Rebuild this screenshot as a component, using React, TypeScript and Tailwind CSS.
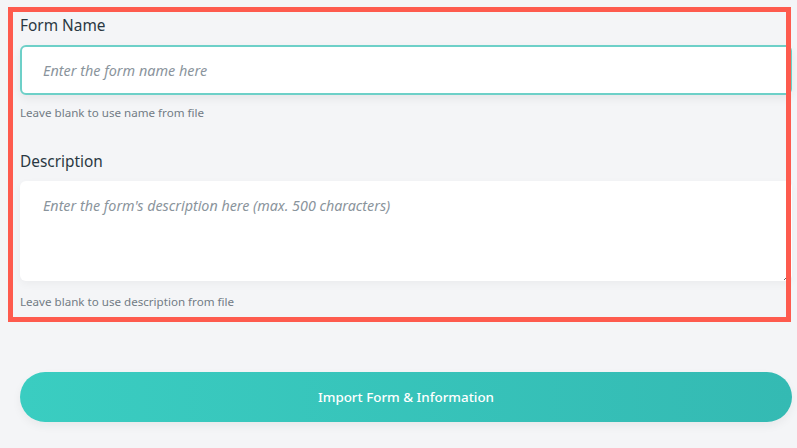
import React from "react";

export default function App() {
  const font = { fontFamily: '"Noto Sans", "Open Sans", sans-serif' };
  return (
    <div
      className="relative min-h-screen w-full bg-[#f4f5f7] pl-5 pr-[5px] pt-[14px] text-[#2a3842]"
      style={font}
    >
      <label className="block text-[15.4px] leading-6">Form Name</label>
      <input
        className="mt-[7px] block h-[50px] w-full rounded-[6px] border-2 border-[#6dd0c8] bg-white pl-[21px] text-[14.4px] italic shadow-[0_4px_10px_rgba(0,0,0,0.06)] outline-none placeholder:text-[#8a949c]"
        placeholder="Enter the form name here"
      />
      <p className="mt-[10px] text-[11.6px] leading-4 text-[#727c85]">
        Leave blank to use name from file
      </p>
      <label className="mt-[29px] block text-[15.4px] leading-6">Description</label>
      <textarea
        className="mt-[7px] block h-[100px] w-full rounded-[6px] bg-white pl-[23px] pt-[14px] text-[14.3px] leading-[22px] italic shadow-[0_3px_8px_rgba(0,0,0,0.04)] outline-none placeholder:text-[#8a949c]"
        placeholder="Enter the form's description here (max. 500 characters)"
      />
      <p className="mt-[13px] text-[11.6px] leading-4 text-[#727c85]">
        Leave blank to use description from file
      </p>
      <button className="mt-[62px] flex h-[50px] w-full items-center justify-center rounded-full bg-gradient-to-r from-[#3acdc1] to-[#34bab3] text-[13.4px] font-medium text-white shadow-[0_4px_10px_rgba(0,0,0,0.05)]">
        Import Form &amp; Information
      </button>
      <div className="pointer-events-none absolute left-[8px] top-[7px] h-[315px] w-[783px] border-[5px] border-[#fe5b4e]" />
    </div>
  );
}
